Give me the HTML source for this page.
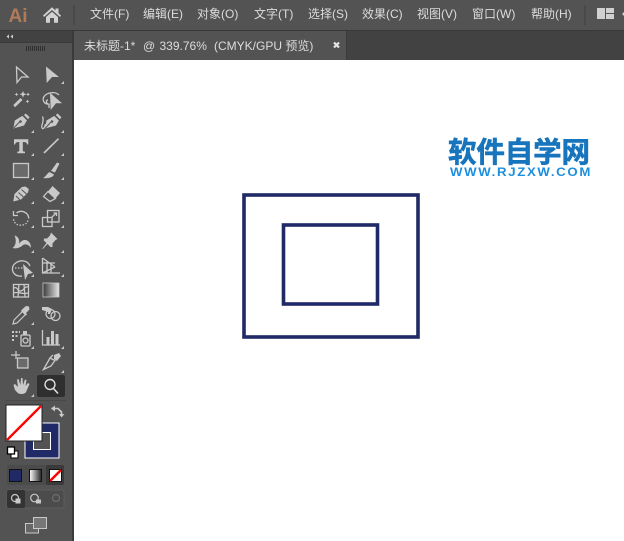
<!DOCTYPE html>
<html>
<head>
<meta charset="utf-8">
<style>
html,body{margin:0;padding:0;background:#fff;width:624px;height:541px;overflow:hidden}
svg{display:block}
text{font-family:"Liberation Sans","Noto Sans CJK SC",sans-serif}
.m{font-size:12px;fill:#dcdcdc}
</style>
</head>
<body>
<svg width="624" height="541" viewBox="0 0 624 541" xmlns="http://www.w3.org/2000/svg">
<defs>
<linearGradient id="g" x1="0" x2="1"><stop offset="0" stop-color="#3a3a3a"/><stop offset="1" stop-color="#e6e6e6"/></linearGradient>
<linearGradient id="g2" x1="0" x2="1"><stop offset="0" stop-color="#fff"/><stop offset="1" stop-color="#222"/></linearGradient>
<filter id="b" x="-5%" y="-5%" width="110%" height="110%"><feGaussianBlur stdDeviation="0.35"/></filter>
</defs>
<rect width="624" height="541" fill="#fff"/>
<!-- top bar -->
<rect width="624" height="30" fill="#535353"/>
<rect y="30" width="624" height="1" fill="#383838"/>
<rect y="31" width="624" height="29" fill="#424242"/>
<rect x="74" y="31" width="272" height="29" fill="#535353"/>
<rect x="346" y="31" width="1" height="29" fill="#3a3a3a"/>
<text x="8.500" y="22" font-weight="bold" fill="#b07b58" style="font-size:19px">Ai</text>
<path d="M43 15.500 52 7.300 55.500 10.500V8.500H58.500V13.200L61 15.500 60 17 52 10 44 17ZM46 17 52 11.700 58 17V22.700H54V18H50V22.700H46Z" fill="#d2d2d2"/>
<rect x="73" y="5" width="2" height="20" fill="#494949"/>
<text class="m" x="90" y="18">文件(F)</text>
<text class="m" x="143" y="18">编辑(E)</text>
<text class="m" x="197" y="18">对象(O)</text>
<text class="m" x="254" y="18">文字(T)</text>
<text class="m" x="308" y="18">选择(S)</text>
<text class="m" x="362" y="18">效果(C)</text>
<text class="m" x="417" y="18">视图(V)</text>
<text class="m" x="472" y="18">窗口(W)</text>
<text class="m" x="531" y="18">帮助(H)</text>
<rect x="584" y="5" width="2" height="20" fill="#494949"/>
<rect x="597" y="8" width="8" height="11" fill="#d0d0d0"/>
<rect x="606" y="8" width="8" height="5" fill="#d0d0d0"/>
<rect x="606" y="14" width="8" height="5" fill="#d0d0d0"/>
<path d="M622 14l2-2v4z" fill="#d0d0d0"/>
<!-- tab -->
<text x="84" y="50" font-size="12" fill="#dcdcdc">未标题-1*</text>
<text x="143" y="50" font-size="12" fill="#dcdcdc">@</text>
<text x="159.500" y="50" font-size="12" fill="#dcdcdc">339.76%</text>
<text x="214" y="50" font-size="12" fill="#dcdcdc">(CMYK/GPU 预览)</text>
<path d="M334 42.500 339 47.500M339 42.500 334 47.500" stroke="#e6e6e6" stroke-width="2.200"/>
<!-- toolbar -->
<rect y="31" width="72" height="510" fill="#535353"/>
<rect x="72" y="31" width="2" height="510" fill="#3a3a3a"/>
<rect y="31" width="72" height="11" fill="#424242"/>
<rect y="42" width="72" height="1" fill="#3a3a3a"/>
<path d="M9 34.500 6.500 36.500 9 38.500ZM13 34.500 10.500 36.500 13 38.500Z" fill="#cfcfcf"/>
<path d="M26.500 46v5M28.500 46v5M30.500 46v5M32.500 46v5M34.500 46v5M36.500 46v5M38.500 46v5M40.500 46v5M42.500 46v5M44.500 46v5" stroke="#2f2f2f" stroke-width="1"/>
<g fill="#c9c9c9" stroke="none">
<!-- corner triangles -->
<path d="M64 81v3h-3zM34 130v3h-3zM64 130v3h-3zM34 153v3h-3zM64 153v3h-3zM34 177v3h-3zM64 177v3h-3zM34 201v3h-3zM64 201v3h-3zM34 225v3h-3zM64 225v3h-3zM34 250v3h-3zM64 250v3h-3zM34 274v3h-3zM64 274v3h-3zM34 322v3h-3zM34 346v3h-3zM64 346v3h-3zM64 370v3h-3zM34 394v3h-3z"/>
<!-- direct selection -->
<path d="M46 66.500 59 77H52L46.700 83Z"/>
<!-- magic wand -->
<path d="M13.300 105 20.500 98 22.500 100 15 107.300Z" fill="#c9c9c9"/>
<path d="M23 91l1 2.300 2.300 1-2.300 1-1 2.300-1-2.300-2.300-1 2.300-1zM28 92.500l.6 1.300 1.300.6-1.300.6-.6 1.300-.6-1.300-1.300-.6 1.300-.6zM27.500 99.500l.6 1.300 1.300.6-1.300.6-.6 1.300-.6-1.300-1.300-.6 1.300-.6zM16.500 92.500l.6 1.300 1.300.6-1.300.6-.6 1.300-.6-1.300-1.300-.6 1.300-.6z"/>
<!-- lasso arrow -->
<path d="M50 92.700 62 103.200H56L50.700 110Z"/>
<!-- pen -->
<path d="M13.300 128.500 14.800 120.500 22.500 115.800 27 120.200 24 125.500Z"/>
<path d="M24 115l1.800-1.500 3.800 3.800-1.500 2z"/>
<!-- curvature pen -->
<path d="M45 128.500 46.500 120.500 54.500 115.800 59 120.200 56 125.500Z"/>
<path d="M55.800 115l1.800-1.500 3.800 3.800-1.500 2z"/>
<!-- T -->
<path d="M14 139.300H28.300V144.500H27.200C26.800 142.500 25.500 142 22.800 142V151.200L25 151.700V153.300H17.300V151.700L19.300 151.200V142C16.800 142 15.500 142.500 15.100 144.500H14Z"/>
<!-- brush -->
<path d="M51 171 57 162.500 59.500 163.500 55 172.500ZM49.500 172 54 174.500C53 177.500 48 178.700 43 178 46 176.500 47 173.500 49.500 172Z"/>
<!-- pencil -->
<path d="M13.300 201.500 14.500 194 22 187 25.500 186.500 28.800 189 28 192.500 21 199.500Z"/>
<!-- eraser top -->
<path d="M52.500 186 60 193 55.500 198.500 48 191.500Z"/>
<!-- pin -->
<path d="M51 232.500 57.500 239 55.500 240 52.500 243.500 52.500 247 50.500 247 47.500 244 42.800 249 42.300 248.500 46.500 243 43.800 240.500 44 238.500 47 238.500 50 235.500Z"/>
<!-- width -->
<path d="M14.500 235.500C18 236 20 240 19 244 21.500 240 25 239 28 241 30.500 243 31 246 31 248 29 245 26 243.500 23 245 20.500 247.500 17 249 12.500 248 15.500 246 17 241 14.500 235.500Z"/>
<!-- shape builder arrow -->
<path d="M23 264 33 273 28 274 25 280Z"/>
<!-- blend -->
<path d="M42 307h6l4 2-2 5-2 0v-2l-6-2z"/>
<!-- hand -->
<path d="M13.500 385 15 384 18 387 17 379.500 18.500 379 20.500 385 21 378h1.500L23 385 25 379.500 26.500 380 25.500 386 28 383 29.500 384 26.500 391C26 393 24 394 21 394 18 394 17 392 15 390Z"/>
</g>
<!-- dark details on filled icons -->
<g fill="none" stroke="#535353" stroke-width="1">
<path d="M13.800 128 19.500 122M45.500 128 51 122"/>
<path d="M16 196 20 200M18.500 192.500 23.500 197M21.500 189.500 26.500 194"/>
<path d="M22 114.800 27.800 120.500M53.800 114.800 59.600 120.500"/>
</g>
<circle cx="20.500" cy="121.500" r="1.300" fill="#535353"/>
<circle cx="52" cy="121.500" r="1.300" fill="#535353"/>
<g fill="none" stroke="#c9c9c9" stroke-width="1.300">
<!-- selection -->
<path d="M16.500 67 28 77H21.500L17 82.500Z"/>
<!-- lasso -->
<path d="M49.500 104C44 105 42 100 44 96.500 47 92.500 55 91 59 95"/>
<path d="M48 100C46 100 45.500 103 48 103.500M49 103.500V108" stroke-width="1.300"/>
<!-- curvature pen tail -->
<path d="M45.500 124C44.500 129 42 130 41.800 127 41.500 124 44.500 121 42.500 116.500"/>
<!-- line -->
<path d="M44 153 58.500 138.700" stroke-width="1.600"/>
<!-- rect -->
<rect x="13.500" y="163.500" width="15" height="14" fill="#6a6a6a"/>
<!-- eraser bottom -->
<path d="M48 191.500 43.500 196.500 50 201.500 55.500 198.500Z"/>
<!-- rotate -->
<path d="M16.500 213C21 209.500 28.500 212 28.800 218.500"/>
<path d="M13.500 211V215.500H18" stroke-width="1.300"/>
<path d="M28 220.500C27 224 23 225.800 18.500 225 15.500 224 13.800 222 13.500 219" stroke-dasharray="1.500 1.500"/>
<!-- scale -->
<rect x="42.500" y="217.500" width="9.500" height="9"/>
<rect x="47.500" y="210.500" width="11.500" height="11.500"/>
<path d="M52 217 56.500 212.800M53.500 213H56.500V216"/>
<!-- shape builder -->
<path d="M22 276C15 277 12 272 12.500 268 13 264 18 260 24 261 28 262 29 264 30 266"/>
<path d="M15 268H23" stroke-dasharray="1.500 1.500"/>
<!-- perspective mesh -->
<path d="M42.500 258V273H60M42.500 258 55 267M42.500 273 55 267M47 261V273M51 264V273M42.500 263H55"/>
<!-- mesh -->
<rect x="13.500" y="284.500" width="15" height="12.500"/>
<path d="M14 288C18 286 17 292 21 291 25 290 24 286 28 287M19 284 18 297M24 284 25 297M14 293C18 291 22 295 28 293"/>
<!-- eyedropper -->
<path d="M14 320 23 311 26 314 17 323 13 324Z" stroke-width="1.200"/>
<!-- blend circles -->
<circle cx="50.500" cy="314" r="4.500"/>
<circle cx="55.500" cy="316" r="4.500"/>
<!-- symbol sprayer -->
<rect x="21" y="335" width="9" height="11" rx="1"/>
<circle cx="25.500" cy="340.500" r="2.500"/>
<!-- column graph -->
<path d="M42.500 330V345H60"/>
<!-- artboard -->
<path d="M16 351V359M11 355H20"/>
<rect x="17.500" y="358" width="10.500" height="10" fill="#6a6a6a"/>
<!-- slice -->
<path d="M43.500 369.500 50 358 55 360.500 51 366ZM50 358 53 355"/>
</g>
<g fill="#c9c9c9">
<!-- eyedropper head -->
<path d="M22 309.500 26 306 29 306.500 29.500 309.500 26 313 27 314.500 25.500 315.500 21 311 22 309.500Z"/>
<rect x="46.500" y="337" width="3" height="8"/>
<rect x="51" y="331" width="3" height="14"/>
<rect x="55.500" y="334" width="3" height="11"/>
<rect x="23" y="331" width="4" height="4"/>
<path d="M12 331h2v2h-2zM15.500 331h2v2h-2zM19 331h1v2h-1zM12 335h2v2h-2zM15.500 335h2v2h-2zM12 339h2v2h-2z"/>
<path d="M54 355 59 353 61 356 57 361 54 359Z"/>
</g>
<rect x="43" y="283" width="16" height="14" fill="url(#g)" stroke="#c9c9c9" stroke-width=".8"/>
<!-- zoom tool -->
<rect x="37" y="375" width="28" height="22" rx="2" fill="#2f2f2f"/>
<circle cx="50" cy="384.500" r="5" fill="none" stroke="#dedede" stroke-width="1.400"/>
<path d="M53.500 388.500 58 393.500" stroke="#dedede" stroke-width="1.600"/>
<rect x="6" y="400" width="60" height="1" fill="#484848"/>
<!-- stroke swatch -->
<rect x="25" y="423" width="34" height="35" fill="#1f2a66" stroke="#fff" stroke-width="1"/>
<rect x="33.500" y="432.500" width="17" height="17" fill="#535353" stroke="#fff" stroke-width="1"/>
<!-- fill swatch -->
<rect x="6" y="405" width="36" height="36" fill="#fff" stroke="#222" stroke-width="1"/>
<path d="M7 440 41 406" stroke="#f00" stroke-width="2.300"/>
<!-- swap -->
<path d="M51.500 408.500H58L61.500 412V415" fill="none" stroke="#c9c9c9" stroke-width="1.600"/>
<path d="M55 405.500V411.500L51 408.500ZM59 414H64.500L61.500 417.500Z" fill="#c9c9c9"/>
<!-- default -->
<rect x="11" y="451" width="7" height="7" fill="#fff" stroke="#000"/>
<rect x="7.500" y="447" width="7" height="7" fill="#fff" stroke="#000" stroke-width="1.300"/>
<!-- mode buttons -->
<rect x="7" y="465" width="57" height="20" rx="2" fill="#4b4b4b"/>
<rect x="46" y="465" width="18" height="20" rx="2" fill="#3a3a3a"/>
<rect x="9.500" y="469.500" width="12" height="12" fill="#1f2a66" stroke="#111"/>
<rect x="29.500" y="469.500" width="12" height="12" fill="url(#g2)" stroke="#111"/>
<rect x="49.500" y="469.500" width="12" height="12" fill="#fff" stroke="#111"/>
<path d="M50 481 61 470" stroke="#f00" stroke-width="2.500"/>
<!-- draw modes -->
<rect x="7" y="490" width="57" height="18" rx="2" fill="#4c4c4c" stroke="#5c5c5c"/>
<rect x="7" y="490" width="18" height="18" rx="2" fill="#333"/>
<circle cx="15" cy="498" r="3.500" fill="none" stroke="#c9c9c9" stroke-width="1.200"/>
<rect x="15.500" y="498.500" width="5" height="5" fill="#c9c9c9"/>
<circle cx="34.500" cy="498" r="3.800" fill="none" stroke="#c9c9c9" stroke-width="1.200"/>
<rect x="36" y="499.500" width="5" height="4" fill="#c9c9c9"/>
<circle cx="56" cy="498" r="3.500" fill="none" stroke="#6e6e6e" stroke-width="1.200"/>
<!-- screen mode -->
<rect x="25.500" y="523.500" width="13" height="9.500" fill="#666" stroke="#c9c9c9"/>
<rect x="33.500" y="517.500" width="13" height="11" fill="#777" stroke="#c9c9c9"/>
<!-- artwork -->
<rect x="244" y="195" width="174" height="142" fill="none" stroke="#1f2a66" stroke-width="3.600"/>
<rect x="283.500" y="225" width="94" height="79" fill="none" stroke="#1f2a66" stroke-width="3.600"/>
<!-- watermark -->
<g filter="url(#b)">
<text x="448" y="162" font-size="28.500" font-weight="bold" fill="#1874bc" stroke="#1874bc" stroke-width=".6" textLength="142" lengthAdjust="spacing" style="font-family:'Noto Sans CJK SC',sans-serif">软件自学网</text>
<text transform="translate(450 176) scale(1.150 1)" font-size="11.500" font-weight="bold" fill="#1e8fdc" letter-spacing="1.450">WWW.RJZXW.COM</text>
</g>
</svg>
</body>
</html>
